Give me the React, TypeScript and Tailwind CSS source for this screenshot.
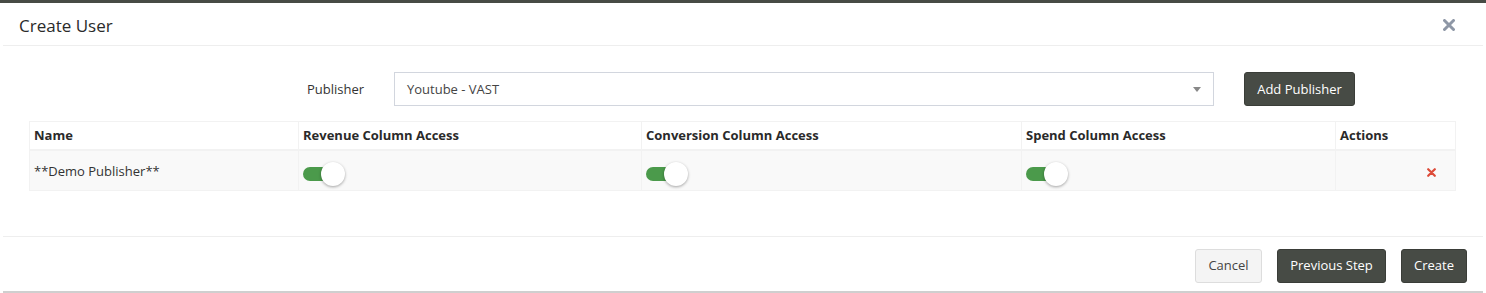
import React from 'react';

const font = { fontFamily: '"Open Sans", "Noto Sans", Arial, sans-serif' };

function Toggle() {
  return (
    <div className="relative w-[38px] h-[24px] flex items-center">
      <div className="w-[38px] h-[14px] rounded-full bg-[#4b9a4b]" />
      <div className="absolute left-[18px] top-0 w-[24px] h-[24px] rounded-full bg-white shadow-[0_1px_3px_rgba(0,0,0,0.35)]" />
    </div>
  );
}

const columns = [
  { label: 'Name', w: 'w-[268px]' },
  { label: 'Revenue Column Access', w: 'w-[343px]' },
  { label: 'Conversion Column Access', w: 'w-[380px]' },
  { label: 'Spend Column Access', w: 'w-[314px]' },
  { label: 'Actions', w: 'flex-1' },
];

export default function App() {
  return (
    <div className="w-[1486px] h-[293px] bg-white text-[#333] overflow-hidden" style={font}>
      <div className="h-[3px] bg-[#474b45]" />
      <div className="mx-[3px] h-[43px] border-b border-[#eeeeee] flex items-center justify-between pl-[16px] pr-[28px] pt-[4px]">
        <h2 className="text-[17px] text-[#2a2a2a] leading-none pb-[2px]">Create User</h2>
        <svg width="12" height="12" viewBox="0 0 12 12" className="mb-[2px]">
          <path d="M1.5 1.5 L10.5 10.5 M10.5 1.5 L1.5 10.5" stroke="#8e97a6" strokeWidth="3" strokeLinecap="round" />
        </svg>
      </div>

      <div className="h-[191px] mx-[3px] border-b border-[#eeeeee] pt-[26px]">
        <div className="flex items-center h-[34px]">
          <label className="ml-[304px] w-[87px] text-[13px] text-[#333] pt-[2px]">Publisher</label>
          <div className="w-[820px] h-[34px] border border-[#d2d6de] flex items-center justify-between pl-[12px] pr-[12px]">
            <span className="text-[13px] text-[#444] pt-[2px]">Youtube - VAST</span>
            <svg width="8" height="5" viewBox="0 0 8 5">
              <path d="M0 0 L8 0 L4 5 Z" fill="#888" />
            </svg>
          </div>
          <button className="ml-[30px] w-[111px] h-[34px] rounded-[3px] bg-[#474b45] border border-[#3a3d38] text-white text-[13px] pt-[1px]">
            Add Publisher
          </button>
        </div>

        <div className="ml-[26px] w-[1427px] mt-[15px] border border-[#f2f2f2]">
          <div className="flex h-[29px] border-b-2 border-[#f2f2f2]">
            {columns.map((c, i) => (
              <div
                key={c.label}
                className={`${c.w} ${i > 0 ? 'border-l border-[#f2f2f2]' : ''} flex items-center px-[4px] pt-[1px] text-[13px] font-bold text-[#2a2a2a]`}
              >
                {c.label}
              </div>
            ))}
          </div>
          <div className="flex h-[39px] bg-[#f9f9f9]">
            <div className="w-[268px] px-[4px] pt-[2px] flex items-center text-[13px] text-[#333]">**Demo Publisher**</div>
            <div className="w-[343px] border-l border-[#f2f2f2] px-[4px] flex items-center pt-[6px]">
              <Toggle />
            </div>
            <div className="w-[380px] border-l border-[#f2f2f2] px-[4px] flex items-center pt-[6px]">
              <Toggle />
            </div>
            <div className="w-[314px] border-l border-[#f2f2f2] px-[4px] flex items-center pt-[6px]">
              <Toggle />
            </div>
            <div className="flex-1 border-l border-[#f2f2f2] flex items-center justify-end pr-[19px] pt-[4px]">
              <svg width="9" height="9" viewBox="0 0 9 9">
                <path d="M1.2 1.2 L7.8 7.8 M7.8 1.2 L1.2 7.8" stroke="#dd4b39" strokeWidth="2.2" strokeLinecap="round" />
              </svg>
            </div>
          </div>
        </div>
      </div>

      <div className="mx-[3px] h-[56px] border-b-2 border-[#cfcfcf] flex items-center justify-end gap-[15px] pr-[16px] pt-[3px]">
        <button className="w-[67px] h-[34px] rounded-[3px] bg-[#f4f4f4] border border-[#dddddd] text-[13px] text-[#444] pt-[1px]">Cancel</button>
        <button className="w-[109px] h-[34px] rounded-[3px] bg-[#474b45] border border-[#3a3d38] text-[13px] text-white pt-[1px]">Previous Step</button>
        <button className="w-[66px] h-[34px] rounded-[3px] bg-[#474b45] border border-[#3a3d38] text-[13px] text-white pt-[1px]">Create</button>
      </div>
    </div>
  );
}
